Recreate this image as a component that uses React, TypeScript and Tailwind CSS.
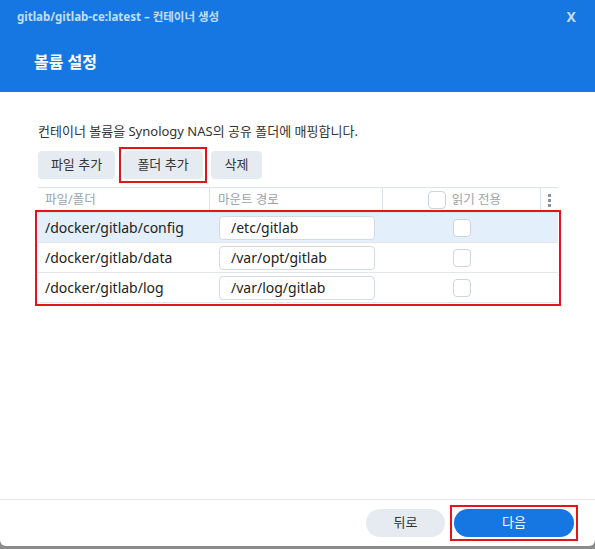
import React from 'react';

const rows = [
  { src: '/docker/gitlab/config', dest: '/etc/gitlab', selected: true },
  { src: '/docker/gitlab/data', dest: '/var/opt/gitlab', selected: false },
  { src: '/docker/gitlab/log', dest: '/var/log/gitlab', selected: false },
];

const Check = () => (
  <span className="block w-[18px] h-[18px] rounded-[4px] border border-[#cdd4dc] bg-white" />
);

// square red highlight drawn over an element
const Mark = () => (
  <span className="absolute -inset-[4px] border-2 border-[#e3141b] pointer-events-none" />
);

export default function App() {
  return (
    <div
      className="w-[595px] h-[549px] bg-[#8c8c8c] overflow-hidden"
      style={{ fontFamily: '"Noto Sans", "Noto Sans CJK KR", sans-serif' }}
    >
      <div className="h-[546px] bg-white rounded-b-[6px] flex flex-col">
        {/* header */}
        <div className="h-[92px] bg-[#1677e3] shrink-0">
          <div className="h-[34px] flex items-center justify-between pl-[17px] pr-[19px]">
            <span className="text-[11.5px] font-bold text-white/75">
              gitlab/gitlab-ce:latest – 컨테이너 생성
            </span>
            <span className="text-[14px] font-bold text-white/75 leading-none">X</span>
          </div>
          <div className="pl-[34px] pt-[16px] text-[16px] font-bold text-white">볼륨 설정</div>
        </div>

        {/* body */}
        <div className="flex-1 px-[38px] pt-[30px]">
          <p className="text-[13px] leading-[18px] text-[#333]">
            컨테이너 볼륨을 Synology NAS의 공유 폴더에 매핑합니다.
          </p>

          <div className="mt-[11px] flex gap-[8px]">
            <button className="h-[28px] w-[77px] rounded-[4px] bg-[#e6ebf1] text-[13px] text-[#333]">
              파일 추가
            </button>
            <button className="relative h-[28px] w-[80px] rounded-[4px] bg-[#e6ebf1] text-[13px] text-[#333]">
              폴더 추가
              <Mark />
            </button>
            <button className="h-[28px] w-[51px] rounded-[4px] bg-[#e6ebf1] text-[13px] text-[#333]">
              삭제
            </button>
          </div>

          <div className="mt-[8px] w-[520px]">
            {/* table header */}
            <div className="h-[26px] flex border-t border-b border-[#dde3ea] text-[12.5px] text-[#9aa3ad]">
              <div className="w-[172px] pl-[7px] flex items-center border-r border-[#dde3ea]">파일/폴더</div>
              <div className="w-[173px] pl-[8px] flex items-center border-r border-[#dde3ea]">마운트 경로</div>
              <div className="w-[158px] flex items-center justify-center gap-[6px] border-r border-[#dde3ea] pl-[6px]">
                <Check />
                <span>읽기 전용</span>
              </div>
              <div className="flex-1 flex flex-col items-center justify-center gap-[2px]">
                <span className="w-[3px] h-[3px] bg-[#8a939c]" />
                <span className="w-[3px] h-[3px] bg-[#8a939c]" />
                <span className="w-[3px] h-[3px] bg-[#8a939c]" />
              </div>
            </div>

            {/* rows */}
            <div className="outline-2 outline-[#e3141b] outline-offset-[1px]">
              {rows.map((r) => (
                <div
                  key={r.src}
                  className={`h-[30px] flex items-center border-b border-[#e3e7ec] text-[14px] text-[#222] ${
                    r.selected ? 'bg-[#e3effb]' : 'bg-white'
                  }`}
                >
                  <div className="w-[172px] pl-[7px]">{r.src}</div>
                  <div className="w-[173px] pl-[9px]">
                    <div className="w-[156px] h-[24px] rounded-[4px] border border-[#d3dae1] bg-white pl-[11px] flex items-center">
                      {r.dest}
                    </div>
                  </div>
                  <div className="w-[158px] flex justify-center">
                    <Check />
                  </div>
                </div>
              ))}
            </div>
          </div>
        </div>

        {/* footer */}
        <div className="h-[47px] shrink-0 border-t border-[#e5e8eb] flex items-center justify-end gap-[9px] pr-[21px]">
          <button className="h-[28px] w-[79px] rounded-full bg-[#e6ebf1] text-[13px] text-[#333]">뒤로</button>
          <button className="relative h-[28px] w-[120px] rounded-full bg-[#1677e3] text-[13px] text-white">
            다음
            <Mark />
          </button>
        </div>
      </div>
    </div>
  );
}
